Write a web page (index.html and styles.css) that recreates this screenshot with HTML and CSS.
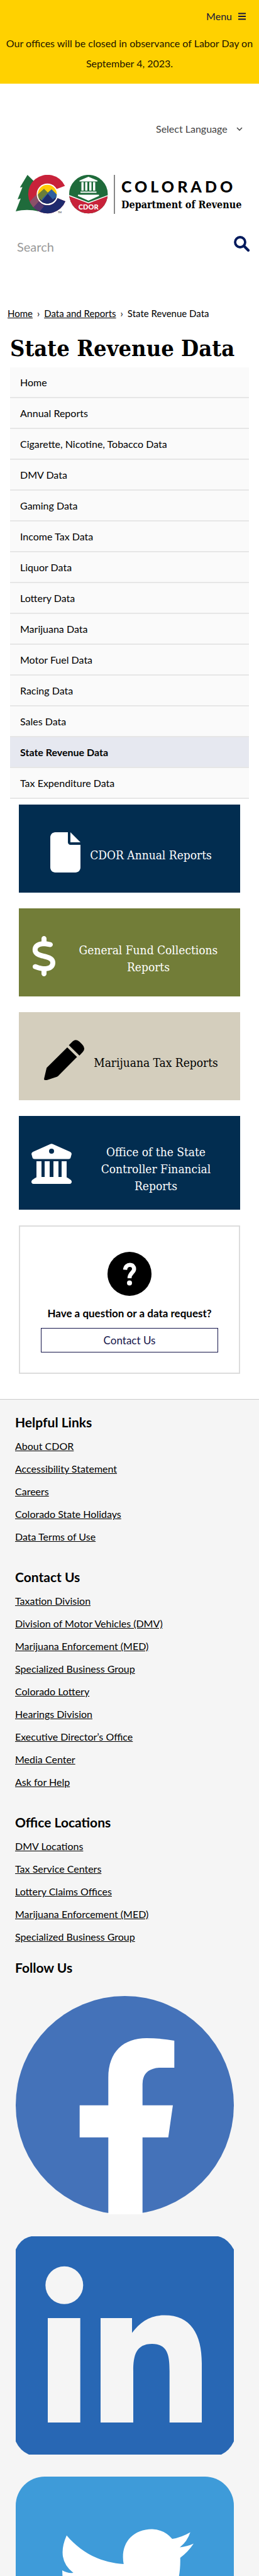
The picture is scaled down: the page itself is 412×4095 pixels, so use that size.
FILE: index.html
```html
<!DOCTYPE html>
<html lang="en">
<head>
<meta charset="utf-8">
<meta name="viewport" content="width=device-width, initial-scale=1">
<title>State Revenue Data</title>
<link rel="stylesheet" href="styles.css">
</head>
<body>
<div class="banner">
  <div class="menu-bar">
    <button class="menu-button" type="button">Menu
      <svg width="12" height="12" viewBox="0 0 12 12" aria-hidden="true"><path d="M0 1.5h12M0 6h12M0 10.5h12" stroke="currentColor" stroke-width="2"/></svg>
    </button>
  </div>
  <p class="alert">Our offices will be closed in observance of Labor Day on September 4, 2023.</p>
</div>

<header class="header">
  <div class="language">
    <select class="language-select" aria-label="Language"><option>Select Language</option></select>
    <svg width="10" height="6" viewBox="0 0 10 6" aria-hidden="true"><path d="M1 1l4 4 4-4" fill="none" stroke="currentColor" stroke-width="1.5"/></svg>
  </div>

  <a class="brand" href="#">
    <svg class="brand-mark" width="148" height="62" viewBox="0 0 148 62" aria-hidden="true">
      <defs>
        <clipPath id="ring"><path d="M78.3 17.5A30.7 30.7 0 1 0 79 42L66.5 37A17 17 0 1 1 65 22.5Z"/></clipPath>
        <clipPath id="disc"><circle cx="50.3" cy="30.7" r="15"/></clipPath>
        <clipPath id="seal"><circle cx="115.7" cy="30.6" r="30.7"/></clipPath>
      </defs>
      <path d="M18.7 0L6.7 20l4-.5L3 39l5-1.500L0 58c12-3 24-3 36 0V17z" fill="#1f6b3b"/>
      <g clip-path="url(#ring)">
        <path d="M18 0h64v62H18z" fill="#c8223a"/>
        <path d="M30 54L52 31H82V62H30z" fill="#1e2a6d"/>
        <path d="M15 58L20 45 32 32l8 11-14 15z" fill="#8b5068"/>
        <path d="M22 58l15-16 8 8-10 12z" fill="#54386c"/>
      </g>
      <circle cx="50.300" cy="30.700" r="17" fill="#fff"/>
      <g clip-path="url(#disc)">
        <path d="M33 13h36v36H33z" fill="#ffcb05"/>
        <path d="M33 33l12-11 6 6 6-5 12 12v18H33z" fill="#6b7d3a"/>
        <path d="M42 38l15-15 13 13v10H42z" fill="#2f5f9e"/>
        <path d="M33 41l5-3 4 3 9-11 8 9 4-3 6 6v10H33z" fill="#1e2a6d"/>
      </g>
      <text x="67" y="61" class="mark-tm">TM</text>
      <g clip-path="url(#seal)">
        <path d="M85 0h62v62H85z" fill="#1f6b3b"/>
        <path d="M84 33l31.700 12L148 33v29H84z" fill="#c8223a"/>
        <path d="M84 32.500l31.700 12 32-12" fill="none" stroke="#fff" stroke-width="1.500"/>
      </g>
      <path d="M115.700 3L130 9v1.500h-28.500V9zM104.500 11.500h3.500V25h-3.500zM110.500 11.500h3.500V25h-3.500zM117 11.500h3.500V25H117zM123 11.500h3.500V25H123zM103 26.500h25.500v2H103zM99 31.500h33.500v2L115.700 41 99 33.500z" fill="#fff"/>
      <text x="115.700" y="55" text-anchor="middle" class="mark-name">CDOR</text>
    </svg>
    <span class="brand-text">
      <span class="brand-state">COLORADO</span>
      <span class="brand-dept">Department of Revenue</span>
    </span>
  </a>

  <form class="search">
    <input class="search-input" type="text" placeholder="Search" aria-label="Search">
    <button class="search-button" type="submit" aria-label="Submit search">
      <svg width="25" height="25" viewBox="0 0 25 25" aria-hidden="true"><circle cx="10" cy="10" r="8" fill="none" stroke="currentColor" stroke-width="3.800"/><path d="M16 16l7 7" stroke="currentColor" stroke-width="4.200" stroke-linecap="round"/></svg>
    </button>
  </form>
</header>

<main>
  <nav class="breadcrumb" aria-label="Breadcrumb"><a href="#">Home</a><span>›</span><a href="#">Data and Reports</a><span>›</span>State Revenue Data</nav>
  <h1 class="title">State Revenue Data</h1>

  <ul class="side-nav">
    <li><a href="#">Home</a></li>
    <li><a href="#">Annual Reports</a></li>
    <li><a href="#">Cigarette, Nicotine, Tobacco Data</a></li>
    <li><a href="#">DMV Data</a></li>
    <li><a href="#">Gaming Data</a></li>
    <li><a href="#">Income Tax Data</a></li>
    <li><a href="#">Liquor Data</a></li>
    <li><a href="#">Lottery Data</a></li>
    <li><a href="#">Marijuana Data</a></li>
    <li><a href="#">Motor Fuel Data</a></li>
    <li><a href="#">Racing Data</a></li>
    <li><a href="#">Sales Data</a></li>
    <li><a class="current" href="#" aria-current="page">State Revenue Data</a></li>
    <li><a href="#">Tax Expenditure Data</a></li>
  </ul>

  <div class="tiles">
    <a class="tile tile-navy" href="#">
      <svg width="48" height="64" viewBox="0 0 384 512" aria-hidden="true"><path fill="currentColor" d="M0 64C0 28.700 28.700 0 64 0H224V128c0 17.700 14.300 32 32 32H384V448c0 35.300-28.700 64-64 64H64c-35.300 0-64-28.700-64-64zM384 128H256V0z"/></svg>
      <span class="tile-label">CDOR Annual Reports</span>
    </a>
    <a class="tile tile-olive tile-wide" href="#">
      <svg width="40" height="64" viewBox="0 0 320 512" aria-hidden="true"><path fill="currentColor" d="M160 0c17.700 0 32 14.300 32 32V67.700c1.600 .2 3.100 .4 4.700 .7c.4 .1 .7 .1 1.100 .2l48 8.800c17.400 3.200 28.900 19.900 25.700 37.200s-19.900 28.900-37.200 25.700l-47.500-8.700c-31.300-4.600-58.900-1.500-78.300 6.200s-27.200 18.300-29 28.100c-2 10.700-.5 16.700 1.200 20.400c1.800 3.900 5.500 8.300 12.800 13.200c16.300 10.700 41.300 17.700 73.700 26.300l2.900 .8c28.600 7.600 63.600 16.800 89.600 33.800c14.200 9.300 27.600 21.900 35.900 39.500c8.500 17.900 10.300 37.900 6.400 59.200c-6.900 38-33.100 63.400-65.600 76.700c-13.700 5.600-28.600 9.200-44.400 11V480c0 17.700-14.300 32-32 32s-32-14.300-32-32V445.100c-.4-.1-.9-.1-1.300-.2l-.2 0c-24.400-3.800-64.500-14.300-91.500-26.300c-16.100-7.200-23.400-26.100-16.200-42.200s26.100-23.400 42.200-16.200c20.900 9.300 55.300 18.500 75.200 21.600c31.900 4.700 58.200 2 76-5.300c16.900-6.900 24.600-16.900 26.800-28.900c1.900-10.600 .4-16.700-1.300-20.400c-1.900-4-5.600-8.400-13-13.300c-16.400-10.700-41.500-17.700-74-26.300l-2.800-.7C119.400 279.300 84.400 270 58.400 253c-14.200-9.300-27.500-22-35.800-39.600c-8.400-17.900-10.100-37.900-6.100-59.200C23.700 116 52.300 91.200 84.800 78.300c13.300-5.300 27.900-8.900 43.200-11V32c0-17.700 14.300-32 32-32z"/></svg>
      <span class="tile-label">General Fund Collections Reports</span>
    </a>
    <a class="tile tile-sand" href="#">
      <svg width="64" height="64" viewBox="0 0 64 64" aria-hidden="true"><path fill="currentColor" d="M37 12L52.500 27.300 23.500 56.500Q22.500 58 20.500 58.800L3 64.500Q-.5 64.500 .3 61L4.200 44.500zM39.500 8.500L45.500 2.500Q51-2 56.500 3L60.500 7Q67 13.500 61.500 19.500L56.300 25z"/></svg>
      <span class="tile-label">Marijuana Tax Reports</span>
    </a>
    <a class="tile tile-navy tile-wide" href="#">
      <svg width="64" height="64" viewBox="0 0 64 64" aria-hidden="true"><path fill="currentColor" fill-rule="evenodd" d="M30 .7Q32 0 34 .7L61.500 13Q64.500 15 63.800 17L62.300 22.500Q61.800 24.500 59 24.500H5Q2.200 24.500 1.700 22.500L.2 17Q-.5 15 2.500 13zM32 8a4 4 0 1 0 0 8 4 4 0 1 0 0-8zM8 28h8v25h5V28h8v25h6V28h8v25h5V28h8v25q0 1 2 1.500L63 58q1.500 2 .8 4Q63 64 61 64H3Q1 64 .2 62q-.7-2 .8-4l5-3.500Q8 54 8 53z"/></svg>
      <span class="tile-label">Office of the State Controller Financial Reports</span>
    </a>

    <section class="ask">
      <svg width="70" height="70" viewBox="0 0 70 70" aria-hidden="true"><circle cx="35" cy="35" r="35"/><path d="M28 28.500C28.500 23 32 20.800 35.500 20.800C40 20.800 42.300 23.600 42.300 27.300C42.300 33 35 33.500 35 42" fill="none" stroke="#fff" stroke-width="6.500"/><circle cx="35" cy="49.500" r="4" fill="#fff"/></svg>
      <p class="ask-text">Have a question or a data request?</p>
      <a class="ask-button" href="#">Contact Us</a>
    </section>
  </div>
</main>

<footer class="footer">
  <section class="group">
    <h2>Helpful Links</h2>
    <ul>
      <li><a href="#">About CDOR</a></li>
      <li><a href="#">Accessibility Statement</a></li>
      <li><a href="#">Careers</a></li>
      <li><a href="#">Colorado State Holidays</a></li>
      <li><a href="#">Data Terms of Use</a></li>
    </ul>
  </section>
  <section class="group">
    <h2>Contact Us</h2>
    <ul>
      <li><a href="#">Taxation Division</a></li>
      <li><a href="#">Division of Motor Vehicles (DMV)</a></li>
      <li><a href="#">Marijuana Enforcement (MED)</a></li>
      <li><a href="#">Specialized Business Group</a></li>
      <li><a href="#">Colorado Lottery</a></li>
      <li><a href="#">Hearings Division</a></li>
      <li><a href="#">Executive Director’s Office</a></li>
      <li><a href="#">Media Center</a></li>
      <li><a href="#">Ask for Help</a></li>
    </ul>
  </section>
  <section class="group group-last">
    <h2>Office Locations</h2>
    <ul>
      <li><a href="#">DMV Locations</a></li>
      <li><a href="#">Tax Service Centers</a></li>
      <li><a href="#">Lottery Claims Offices</a></li>
      <li><a href="#">Marijuana Enforcement (MED)</a></li>
      <li><a href="#">Specialized Business Group</a></li>
    </ul>
  </section>
  <section class="follow">
    <h2>Follow Us</h2>
    <div class="social">
      <a href="#" aria-label="Facebook"><svg viewBox="0 0 347 347"><circle cx="173.500" cy="173.500" r="173.500" fill="#4472b9"/><path fill="#fff" d="M147.300 347V224.700H101.700V173.700H147.300V130C147.300 88 172 67 208 67Q230 67 252.300 71V114H228Q201.700 116 201.700 140V173.700H250L242.700 224.700H201.700V347z"/></svg></a>
      <a href="#" aria-label="LinkedIn"><svg viewBox="0 0 347 347"><path fill="#2867b4" d="M25 0H322Q337 3 347 21V326Q340 341 327 347H21Q7 341 0 326V21Q8 3 25 0z"/><g fill="#f5f5f5"><circle cx="77.300" cy="77.700" r="30"/><path d="M51 130h51.700v166H51zM135 130H185V153.600C198 136 214 125.400 237 125.400C278 125.400 296 155 296 202V296H244.700V214C244.700 190 242 171 217 171C191 171 187 190 187 214V296H135z"/></g></svg></a>
      <a href="#" aria-label="Twitter"><svg viewBox="0 0 347 347"><rect width="347" height="347" rx="46" fill="#3e9bd9"/><path fill="#fff" d="M81 93.500C104 121 136 137 171.700 139C166 108 184 84 217 83.600Q236 84 249 99Q263 97 277.700 88.500Q273 103 261 112.600Q273 111 283 106.500Q274 120 261.700 129C264 205 210 268 130 268Q94 268 65 250Q98 253 124 233Q95 230 86 202Q95 204 104 201Q74 192 74 149Q82 154 91.700 153Q64 132 81 93.500z"/></svg></a>
    </div>
  </section>
</footer>
</body>
</html>
```
FILE: styles.css
```css
* { box-sizing: border-box; }

body {
  margin: 0;
  background: #fff;
  color: #000;
  font: 16px/27px Lato, "Trebuchet MS", sans-serif;
}

ul, p, h1, h2 { margin: 0; padding: 0; }
ul { list-style: none; }
a { color: inherit; }
button, input, select { font: inherit; color: inherit; }
svg { display: block; flex: none; }

.banner { background: #ffd100; padding: 12px 0 16px; color: #1c1400; }
.alert { text-align: center; line-height: 32px; }
.menu-bar { display: flex; justify-content: flex-end; padding: 0 21px; margin-bottom: 14px; }
.menu-button {
  display: flex; align-items: center; gap: 10px;
  border: 0; padding: 0; background: none; color: #14143c;
}

.header { padding: 56px 15px 0 25px; }
.language {
  display: flex; justify-content: flex-end; align-items: center; gap: 14px;
  padding-right: 11px; color: #444;
}
.language-select {
  appearance: none; border: 0; padding: 0; background: none; line-height: 32px;
}
.brand { display: flex; margin-top: 57px; text-decoration: none; }
.mark-tm { font: 4px Lato, sans-serif; }
.mark-name { font: 900 11px Lato, sans-serif; fill: #fff; }
.brand-text {
  display: flex; flex-direction: column; gap: 4px;
  margin-left: 8px; padding: 4px 0 2px 10px; border-left: 2px solid #888;
}
.brand-state { font-weight: 900; font-size: 25px; line-height: 28px; letter-spacing: 5px; }
.brand-dept { font: 700 16px/24px "DejaVu Serif Condensed", "DejaVu Serif", serif; white-space: nowrap; }

.search { display: flex; align-items: flex-start; margin-top: 32px; }
.search-input {
  flex: 1; min-width: 0; height: 40px; border: 0; padding: 2px; background: none;
  font-size: 20px;
}
.search-input::placeholder { color: #999; opacity: 1; }
.search-button { border: 0; padding: 3px 0 0; background: none; color: #001a5c; }

.breadcrumb { display: flex; padding: 73px 12px 0; font-size: 15px; }
.breadcrumb span { padding: 0 7px; }
.title {
  padding: 18px 16px 8px;
  font: 700 36px/46px "DejaVu Serif Condensed", "DejaVu Serif", serif;
}

.side-nav { margin: 0 16px; background: #fafafa; }
.side-nav li { border-bottom: 2px solid #e6e6e6; }
.side-nav a { display: block; padding: 10px 16px; text-decoration: none; }
.side-nav .current { background: #e6e8f0; font-weight: 700; }

.tiles { display: grid; gap: 25px; padding: 9px 30px 40px; }
.tile {
  display: flex; justify-content: center; align-items: flex-start; gap: 15px;
  padding: 44px 15px 24px 20px;
  font: 19px/27px "DejaVu Serif Condensed", "DejaVu Serif", serif;
  text-align: center; text-decoration: none;
}
.tile svg { margin-bottom: 8px; }
.tile-label { align-self: center; }
.tile-wide .tile-label { flex: 1; }
.tile-navy { background: #022d50; color: #fff; }
.tile-olive { background: #727d38; color: #fff; }
.tile-sand { background: #d4cebd; color: #000; }

.ask {
  display: flex; flex-direction: column; align-items: center;
  border: 2px solid #ddd; padding: 40px 33px 32px;
}
.ask-text { margin: 14px 0 10px; font-size: 17px; font-weight: 700; white-space: nowrap; }
.ask-button {
  align-self: stretch; border: 1px solid #14144a; padding: 5px;
  color: #14144a; font-size: 17px; text-align: center; text-decoration: none;
}

.footer { border-top: 1px solid #ccc; padding: 20px 40px 40px 24px; background: #f5f5f5; }
.footer h2 { font-size: 21px; line-height: 32px; }
.group { margin-bottom: 30px; }
.group-last { margin-bottom: 15px; }
.group ul { padding-top: 4px; }
.group li { line-height: 36px; }
.social { display: grid; gap: 35px; padding: 29px 0 0 1px; }
.social svg { width: 100%; height: auto; }
```
